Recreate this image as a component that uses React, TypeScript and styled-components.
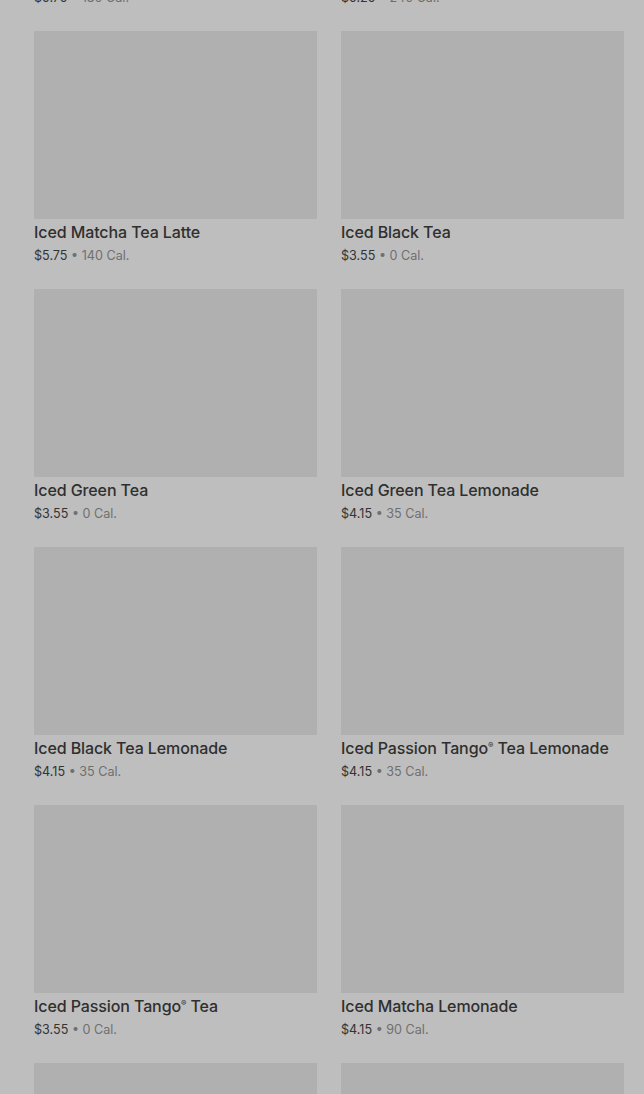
import React from "react";
import styled, { createGlobalStyle } from "styled-components";

const GlobalStyle = createGlobalStyle`
  html, body {
    margin: 0;
    padding: 0;
    overflow: hidden;
    background-color: #bebebe;
    font-family: Inter, "Noto Sans", "Liberation Sans", sans-serif;
  }
`;

const Page = styled.div`
  height: 1094px;
  overflow: hidden;
  background-color: #bebebe;
`;

const Grid = styled.div`
  display: grid;
  grid-template-columns: 283px 283px;
  column-gap: 24px;
  row-gap: 24px;
  padding: 0 20px 0 34px;
  margin-top: -227px;
`;

const Card = styled.div`
  display: flex;
  flex-direction: column;
`;

const Thumb = styled.div`
  height: 188px;
  background-color: #b0b0b0;
`;

const Title = styled.div`
  margin-top: 3px;
  font-size: 16px;
  line-height: 20px;
  font-weight: 500;
  color: #2f2f2f;
  letter-spacing: -0.1px;
  white-space: nowrap;
`;

const Reg = styled.sup`
  font-size: 8px;
  line-height: 0;
  vertical-align: 6px;
`;

const Meta = styled.div`
  margin-top: 5px;
  font-size: 12.6px;
  line-height: 18px;
  color: #6f6f6f;
`;

const Price = styled.span`
  color: #333333;
`;

interface Drink {
  name: React.ReactNode;
  price: string;
  cal: number;
}

const tango = (
  <>
    Tango<Reg>®</Reg>
  </>
);

const drinks: Drink[] = [
  { name: "Iced Matcha Latte", price: "$5.75", cal: 180 },
  { name: "Iced Chai Tea Latte", price: "$5.25", cal: 240 },
  { name: "Iced Matcha Tea Latte", price: "$5.75", cal: 140 },
  { name: "Iced Black Tea", price: "$3.55", cal: 0 },
  { name: "Iced Green Tea", price: "$3.55", cal: 0 },
  { name: "Iced Green Tea Lemonade", price: "$4.15", cal: 35 },
  { name: "Iced Black Tea Lemonade", price: "$4.15", cal: 35 },
  { name: <>Iced Passion {tango} Tea Lemonade</>, price: "$4.15", cal: 35 },
  { name: <>Iced Passion {tango} Tea</>, price: "$3.55", cal: 0 },
  { name: "Iced Matcha Lemonade", price: "$4.15", cal: 90 },
  { name: "Iced Peach Green Tea", price: "$4.15", cal: 60 },
  { name: "Iced Peach Green Tea Lemonade", price: "$4.45", cal: 90 },
];

const App = () => {
  return (
    <Page>
      <GlobalStyle />
      <Grid>
        {drinks.map((d, i) => (
          <Card key={i}>
            <Thumb />
            <Title>{d.name}</Title>
            <Meta>
              <Price>{d.price}</Price> • {d.cal} Cal.
            </Meta>
          </Card>
        ))}
      </Grid>
    </Page>
  );
};

export default App;
